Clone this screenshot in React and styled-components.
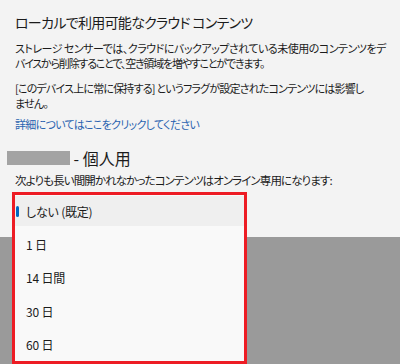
import React from "react";
import styled, { createGlobalStyle } from "styled-components";

const Global = createGlobalStyle`
  html, body { margin: 0; padding: 0; }
  body {
    width: 400px;
    height: 364px;
    overflow: hidden;
    font-family: "Noto Sans CJK JP", "Noto Sans", sans-serif;
    font-feature-settings: "palt" 1;
    color: #1b1b1b;
  }
`;

const Page = styled.div`
  position: relative;
  width: 400px;
  height: 364px;
  background: #9a9a9a;
  overflow: hidden;
`;

const Panel = styled.div`
  height: 237px;
  box-sizing: border-box;
  background: #f3f3f3;
  padding: 12px 0 0 15px;
  display: flex;
  flex-direction: column;
`;

const Title = styled.div`
  font-size: 14px;
  line-height: 20px;
  letter-spacing: -0.7px;
  white-space: nowrap;
`;

const Para = styled.p`
  margin: ${(p) => p.$top}px 0 0;
  font-size: ${(p) => p.$size ?? 11}px;
  line-height: 15px;
  white-space: nowrap;
  display: flex;
  flex-direction: column;
`;

const Line = styled.span`
  letter-spacing: ${(p) => p.$ls}px;
`;

const Link = styled.a`
  margin-top: 6px;
  font-size: 11px;
  line-height: 15px;
  letter-spacing: -0.7px;
  color: #2b64b0;
  text-decoration: none;
  white-space: nowrap;
`;

const Heading = styled.div`
  margin-top: 16px;
  display: flex;
  align-items: center;
  font-size: 16px;
  line-height: 20px;
  white-space: nowrap;
`;

const Redacted = styled.span`
  display: inline-block;
  width: 63px;
  height: 14px;
  margin-left: -8px;
  background: #a3a3a3;
`;

const Menu = styled.div`
  position: absolute;
  left: 12px;
  top: 192px;
  width: 235px;
  height: 172px;
  box-sizing: border-box;
  border: 3px solid #ed1c24;
  background: #f9f9f9;
  padding-top: 1px;
  display: flex;
  flex-direction: column;
  gap: 3.4px;
`;

const Item = styled.div`
  position: relative;
  height: 30px;
  flex-shrink: 0;
  display: flex;
  align-items: center;
  padding-left: 11px;
  font-size: 12px;
  letter-spacing: -0.2px;
  white-space: pre;
  background: ${(p) => (p.$selected ? "#efefef" : "transparent")};
`;

const Indicator = styled.span`
  position: absolute;
  left: 1px;
  top: 10px;
  width: 3px;
  height: 11px;
  border-radius: 1.5px;
  background: #0067c0;
`;

const options = ["しない (既定)", "1 日", "14 日間", "30 日", "60 日"];

export default function App() {
  return (
    <Page>
      <Global />
      <Panel>
        <Title>ローカルで利用可能なクラウド コンテンツ</Title>
        <Para $top={9}>
          <Line $ls={-0.5}>
            ストレージ センサーでは、クラウドにバックアップされている未使用のコンテンツをデ
          </Line>
          <Line $ls={-1.2}>
            バイスから削除することで、空き領域を増やすことができます。
          </Line>
        </Para>
        <Para $top={10}>
          <Line $ls={-0.8}>
            [このデバイス上に常に保持する] というフラグが設定されたコンテンツには影響し
          </Line>
          <Line $ls={-0.8}>ません。</Line>
        </Para>
        <Link href="#">詳細についてはここをクリックしてください</Link>
        <Heading>
          <Redacted />
          <span>&nbsp;- 個人用</span>
        </Heading>
        <Para $top={5} $size={11.5}>
          <Line $ls={-0.9}>
            次よりも長い間開かれなかったコンテンツはオンライン専用になります:
          </Line>
        </Para>
      </Panel>
      <Menu>
        {options.map((o, i) => (
          <Item key={o} $selected={i === 0}>
            {i === 0 && <Indicator />}
            {o}
          </Item>
        ))}
      </Menu>
    </Page>
  );
}
